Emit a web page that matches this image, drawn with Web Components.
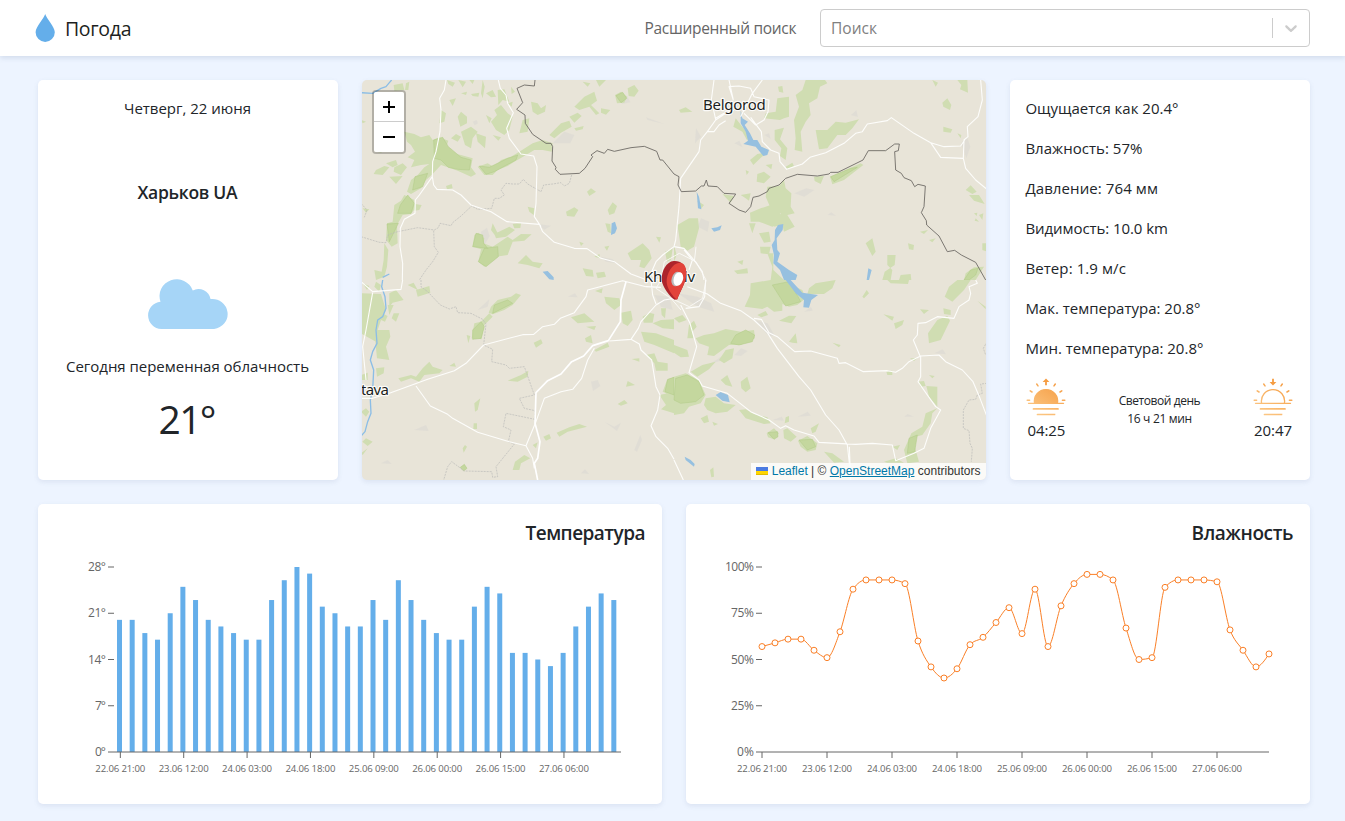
<!DOCTYPE html>
<html lang="ru">
<head>
<meta charset="utf-8">
<title>Погода</title>
<style>
html,body{margin:0;height:100%}
body{background:#edf4ff;color:#212529;font-family:"Open Sans","Noto Sans",sans-serif;font-size:15px;line-height:24px;overflow:hidden}
</style>
</head>
<body>
<weather-app></weather-app>
<script>
const define = (name, html, after) => {
  const tpl = document.createElement('template');
  tpl.innerHTML = html;
  customElements.define(name, class extends HTMLElement {
    constructor() {
      super();
      this.attachShadow({ mode: 'open' }).appendChild(tpl.content.cloneNode(true));
    }
    connectedCallback() { if (after) after.call(this, this.shadowRoot); }
  });
};

/* Single-line text tracked to a given width in px. */
define('fit-text', `<style>:host{display:inline-block;white-space:nowrap}span{display:inline-block}</style><span><slot></slot></span>`, function (root) {
  const span = root.querySelector('span');
  const w = parseFloat(this.getAttribute('w'));
  const n = this.textContent.length;
  span.style.letterSpacing = '0px';
  const natural = span.getBoundingClientRect().width;
  if (!w || !natural || n < 2) return;
  const gap = (w - natural) / (n - 1);
  span.style.letterSpacing = gap.toFixed(3) + 'px';
  span.style.marginRight = (-gap).toFixed(3) + 'px';
});

define('ui-card', `<style>:host{display:block;box-sizing:border-box;background:#fff;border-radius:5px;box-shadow:0 2px 5px rgba(90,110,150,.12);overflow:hidden}</style><slot></slot>`);

define('search-box', `<style>
:host{display:flex;align-items:center;box-sizing:border-box;width:490px;height:38px;border:1px solid #ccc;border-radius:4px;background:#fff;color:#808080}
.value{flex:1;padding-left:10px}
i{width:1px;height:20px;background:#ccc}
svg{margin:0 8px;width:20px;height:20px;fill:#ccc}
</style><div class="value"><fit-text w="46">Поиск</fit-text></div><i></i>
<svg viewBox="0 0 20 20"><path d="M4.516 7.548c.436-.446 1.043-.481 1.576 0L10 11.295l3.908-3.747c.533-.481 1.141-.446 1.574 0 .436.445.408 1.197 0 1.615-.406.418-4.695 4.502-4.695 4.502a1.095 1.095 0 0 1-1.576 0S4.924 9.581 4.516 9.163c-.409-.418-.436-1.17 0-1.615z"/></svg>`);

define('top-bar', `<style>
:host{display:flex;align-items:center;box-sizing:border-box;height:56px;padding:0 35px;background:#fff;box-shadow:0 2px 5px rgba(90,110,150,.18);position:relative;font-size:15.500px}
.brand{display:flex;align-items:center;gap:9px;font-size:19.500px;color:#1d1f21;flex:1}
.brand fit-text{position:relative;top:1px}
.link{color:#666;margin-right:23.500px}
</style>
<div class="brand"><svg width="21" height="28" viewBox="0 0 21 28"><path d="M10.2 0C11.4 4.600 19.800 12.500 19.800 18.300A9.600 9.600 0 0 1 .6 18.300C.6 12.500 9 4.600 10.200 0z" fill="#64aeea"/></svg><fit-text w="66.500">Погода</fit-text></div>
<fit-text class="link" w="152">Расширенный поиск</fit-text><search-box></search-box>`);

define('today-card', `<style>
:host{display:block}
ui-card{height:400px;padding:16px 1px 0 0;display:flex;flex-direction:column;align-items:center}
.city{font-weight:600;font-size:17.500px;line-height:30px;margin-top:57px}
svg{margin:72px 0 0 1px}
.desc{margin-top:24px}
.t{font-size:39px;line-height:48px;margin-top:17px}
</style>
<ui-card>
<fit-text w="127">Четверг, 22 июня</fit-text>
<fit-text class="city" w="100">Харьков UA</fit-text>
<svg width="80" height="51" viewBox="0.400 0 78.800 51" preserveAspectRatio="none"><path d="M13.500 50A13.700 13.700 0 0 1 12.700 22.700A16.500 16.500 0 0 1 44.500 11.500A12 12 0 0 1 62 20A15 15 0 0 1 65.500 50z" fill="#a6d5f7"/></svg>
<fit-text class="desc" w="243">Сегодня переменная облачность</fit-text>
<fit-text class="t" w="58">21°</fit-text>
</ui-card>`);

const sun = (fill, arrow, id) => `<svg width="40" height="42" viewBox="0 -1 40 42">
<defs><linearGradient id="${id}" gradientUnits="userSpaceOnUse" x1="30" y1="4" x2="8" y2="38"><stop offset="0" stop-color="#f59c42"/><stop offset="1" stop-color="#fcc987"/></linearGradient></defs>
<g fill="none" stroke="url(#${id})" stroke-width="1.300" stroke-linecap="round">
<path fill="${fill ? `url(#${id})` : 'none'}" d="M8.600 26.300A11.600 11.600 0 1 1 31.400 26.300${fill ? 'z' : ''}"/>
<path d="M2.500 26.300H37.500"/><path stroke-width="1.700" d="M7.500 31.900H32.001M11.500 37.500H28.500V37.501"/>
<path stroke-width="1.500" d="M1.200 23.300H3.600M36.400 23.300H38.800M4.200 13.900L6 15M35.800 13.900L34 15M10.700 7L12 8.900M29.300 7L28 8.900"/>
</g><path fill="#f59c42" d="${arrow}"/></svg>`;

define('details-card', `<style>
:host{display:block}
ui-card{height:400px;padding:16px 16px 0 15.400px}
p{margin:0 0 16px;height:24px}
.day{display:flex;justify-content:space-between;align-items:flex-start}
.side{display:flex;flex-direction:column;align-items:center;width:42px}
.mid{font-size:12px;line-height:18px;display:flex;flex-direction:column;align-items:center;padding-top:16px}
svg{display:block}
</style>
<ui-card>
<p><fit-text w="153">Ощущается как 20.4°</fit-text></p>
<p><fit-text w="117">Влажность: 57%</fit-text></p>
<p><fit-text w="132.500">Давление: 764 мм</fit-text></p>
<p><fit-text w="142.500">Видимость: 10.0 km</fit-text></p>
<p><fit-text w="100.500">Ветер: 1.9 м/с</fit-text></p>
<p><fit-text w="175">Мак. температура: 20.8°</fit-text></p>
<p><fit-text w="178">Мин. температура: 20.8°</fit-text></p>
<div class="day">
<div class="side">${sun(true, 'M20 1.500L23.400 5H20.900V8.300H19.100V5H16.600z', 'a')}<fit-text w="38">04:25</fit-text></div>
<div class="mid"><fit-text w="82">Световой день</fit-text><fit-text w="65">16 ч 21 мин</fit-text></div>
<div class="side">${sun(false, 'M20 8.500L16.600 5.100H19.100V1.800H20.900V5.100H23.400z', 'b')}<fit-text w="38">20:47</fit-text></div>
</div>
</ui-card>`);

/* Map geometry: each quarter has its own origin, 3 units per pixel. */
const quarters = [
{ x:0, y:0,
 g:'M130 155L160 162 180 172 205 165 215 180 235 172 262 182 255 205 275 220 300 225 335 235 330 262 345 282 330 290 290 272 260 262 240 255 215 282 195 300 180 325 150 342 138 335 150 300 170 285 190 262 205 252 180 255 150 262 160 240 140 232 162 215 150 195 138 185ZM100 375L120 362 130 345 160 360 163 385 150 402 125 405 108 435 110 490 92 500 75 480 78 430 95 425ZM70 490L82 510 78 560 70 590 45 600 40 570 62 575 68 540ZM350 260L380 250 400 262 420 240 450 230 475 215 515 190 545 180 575 190 572 215 545 210 520 210 490 228 460 245 440 258 410 270 395 285 370 285ZM565 165L600 130 625 122 632 140 600 158 580 175ZM625 110L650 98 662 108 640 128ZM640 145L668 138 665 148 645 152ZM670 50L700 35 708 62 690 75 715 100 705 105 685 80 655 90 640 80ZM762 45L780 35 798 50 790 68 768 70ZM800 25L820 15 833 32 820 50 803 48ZM720 85L748 90 735 104 720 98ZM705 0H735L715 20ZM665 5L688 10 680 20ZM400 90L420 75 440 100 455 110 445 150 430 165 405 150 390 125 408 105ZM510 65L530 70 540 85 555 75 552 95 530 105 515 95ZM485 120L505 115 500 155 475 160 480 140ZM300 155L330 140 350 155 335 175 330 205 312 195ZM270 175L285 162 300 170 290 185ZM345 160L375 170 372 205 350 185ZM240 90L255 100 250 125 235 130ZM265 60L285 55 275 78ZM258 0L282 8 275 20 262 12ZM292 0L315 5 305 22ZM365 0L371 20 365 55 360 40ZM375 40L395 30 405 50 390 52ZM330 42L355 38 352 50 335 48ZM410 30L430 28 445 65 425 60 412 75ZM290 110L300 95 318 110 318 130 298 140ZM98 15L125 10 130 30 100 32ZM135 10L145 5 142 30 132 30ZM45 270L70 258 85 262 65 285 38 282ZM75 250L105 240 110 255 95 262ZM100 262L125 250 138 262 120 285 98 275ZM85 290L125 288 105 312ZM5 385L25 388 15 398ZM255 318L272 312 275 325 258 328ZM162 372L182 375 175 390 160 392ZM375 105L392 115 385 130ZM300 40L318 35 315 45ZM325 0L340 0 335 12ZM450 20L462 35 452 42ZM395 165L420 172 412 182ZM440 70L455 65 452 80ZM340 465L352 458 370 475 368 490 395 500 440 470 455 480 480 462 512 463 490 482 455 485 440 525 405 530 370 560 352 545 360 508 335 500ZM395 430L410 460 405 470 390 450ZM400 462L445 440 462 450 435 470 405 475ZM455 432L480 430 478 444 460 445ZM470 550L495 525 515 545 545 550 535 565 500 555ZM500 380L520 385 518 405 505 395ZM678 335L690 325 705 335 685 348ZM615 395L640 382 652 390 640 410 618 408ZM740 390L755 367 768 378 760 400 745 405ZM733 430L748 432 750 460 740 455ZM800 520L845 490 865 510 872 535 850 565 835 560 840 540 810 540ZM885 470L900 472 895 488ZM700 530L715 522 718 535ZM655 485L668 490 660 498ZM665 565L695 570 698 590 675 588ZM705 578L730 575 735 590 710 595ZM912 515L935 505 930 540 918 545ZM730 500L745 497 738 512ZM0 120L15 125 5 130ZM55 205L62 218 45 215Z',
 d:'M218 180L245 172 262 200 300 232 330 240 325 270 290 268 262 262 240 240 220 235ZM162 290L200 280 185 320 155 330ZM118 375L140 345 160 370 150 400 110 400ZM78 432L112 430 85 485ZM355 258L385 262 440 235 470 225 465 240 400 275 375 283ZM352 545L370 505 410 500 412 530 375 560ZM335 500L345 460 365 465 368 490 380 505ZM765 47L785 37 797 55 780 68Z',
 w:'M752 430L762 425 768 445 762 460 750 465ZM545 575L560 573 578 592 578 600 565 598Z',
 r:'M255 0L250 30 236 55 240 90 237 155 225 215 215 245 214 290 175 345 163 360 162 400 130 418 118 445 117 500 125 550 124 600M214 290L218 315 228 328 275 330 300 345 330 375 390 395 438 425 535 433 545 455 580 487 640 505 678 506 720 535 760 545 810 582 850 597 900 600M412 0L418 25 435 45 440 70 457 98 437 145 445 175 480 222 518 228 528 260 525 370 520 410 540 440M939 500L905 525 885 545 872 575 880 600',
 rv:'M0 38L35 40 60 25 75 20 85 8 92 0M65 592L85 582',
 b:'M522 0L520 18 490 15 468 25 485 68 467 88 492 105 493 130 515 163 555 190 570 190 575 200 573 243 585 262 583 268 597 283 655 280 672 265 695 230 690 225 708 212 730 220 740 208 760 214 810 203 850 199 887 214 897 240 905 240 939 282',
 s:'M632 285L625 310 610 318 600 308 575 312 548 315 540 335 500 312 487 298 475 312 455 312 435 310 420 330 430 345 415 355 400 355 392 385 350 388 332 378 300 408 275 428 270 437 237 430 232 443 220 450 170 443 110 455 80 465 75 488 55 487 0 470M218 452L220 500 232 517 215 545 195 570 175 600M0 370L18 390 10 412' },
{ x:939, y:0,
 g:'M395 0H453L460 10 438 20 430 55 405 70 410 105 395 125 380 155 385 215 362 210 365 175 360 120 375 80 365 45 385 30ZM310 55L345 50 345 110 330 115 318 120 270 115 275 100 305 95ZM312 20L325 18 328 38 315 35ZM302 150L330 143 318 178 340 205 335 240 318 228 322 205 302 180ZM425 150L460 150 485 125 515 128 555 118 535 145 515 165 490 165 460 205 435 208ZM15 90L35 82 55 95 20 98ZM805 68L820 55 832 75 828 90 808 80ZM850 0H880L882 38 858 28 862 15ZM775 0L792 8 785 20ZM808 140L835 148 830 158 808 155ZM850 160L862 165 860 175ZM875 330L890 316 908 335 895 342ZM885 345L915 345 932 372 900 362ZM335 260L355 248 360 258 340 268ZM420 290L450 288 440 312 422 303ZM468 290L520 268 560 250 568 255 510 300 475 313ZM185 115L205 140 225 165 220 182 205 155 178 140ZM228 240L250 222 285 215 262 232 238 255ZM275 255L295 252 292 268ZM250 282L270 275 290 290 270 310 248 305ZM215 270L225 275 218 285ZM145 342L180 348 170 368ZM280 320L315 318 330 300 335 325 352 340 350 380 362 400 340 405 362 440 330 455 325 435 300 440 320 400 290 385 275 350ZM228 398L260 385 290 375 315 380 322 430 295 440 255 425 230 425ZM255 460L285 455 290 485 270 488ZM258 500L290 500 285 523 260 520ZM225 430L245 430 235 460ZM10 435L45 415 72 415 75 445 60 500 40 512 20 500 15 465ZM0 495L8 525 0 545ZM70 362L90 375 80 388ZM200 345L230 340 225 362 215 355ZM575 490L595 475 605 515 595 528ZM640 525L665 525 662 555 632 575 625 600H650L655 570 640 555ZM680 585L710 582 712 600H675ZM702 490L720 495 718 510 705 508ZM738 455L762 450 750 462ZM765 480L785 475 775 487ZM875 580L900 562 930 560 905 600H870ZM925 490H939V515L925 510ZM900 400L910 398 908 408ZM915 405L928 400 925 420ZM905 415L915 425 902 422ZM180 572L220 565 222 580 190 582ZM190 545L208 540 205 555ZM280 520L298 520 298 570 330 600H290L295 560Z',
 d:'M470 290L530 265 550 262 480 305ZM890 570L912 565 905 585 885 600H870Z',
 w:'M200 90L205 115 222 125 212 135 228 160 238 180 250 180 262 200 285 210 280 225 268 228 245 200 208 192 222 182 215 155 200 130ZM68 335L75 350 82 388 72 385ZM112 445L130 442 143 436 138 450 120 455ZM312 435L328 432 326 450 308 475 310 510 318 520 310 545 345 570 370 585 365 600H330L318 570 298 550 300 525 293 495 302 480 303 450ZM583 565L593 570 585 600H578Z',
 r:'M120 0L112 60 125 118M165 0L178 60 165 20 195 18 230 25 240 50 285 60 282 95 270 120 245 135 210 100M265 0L235 40 225 60 200 110M180 90L155 100 125 120 100 155 80 180 75 215 20 295 15 380 5 480 0 500M125 115L150 100M100 155H120L135 135 155 122M230 112L262 155 265 185 290 210 315 220 318 245 338 268 385 252 408 232 455 218 510 190 545 160 565 155 580 132 640 122 652 113 720 160 770 188 810 200 860 198 872 180M770 188L800 232 868 235 870 180 882 170 880 140 912 110 925 60 920 0M868 235L875 265 905 300 939 328M0 500L30 505 60 540 85 575 90 600M30 510L55 540 45 570',
 b:'M0 282L15 290 12 315 22 335 65 333 82 318 90 318 97 300 102 318 130 320 150 340 185 342 180 350 165 370 195 390 215 397 230 380 237 352 255 348 280 335 285 325 315 315 335 295 370 283 430 288 465 282 470 277 492 277 567 240 583 212 635 212 662 192 676 192 673 212 662 215 665 270 682 280 690 293 712 302 722 320 732 313 754 318 750 380 742 398 757 422 758 435 795 468 820 515 842 511 862 525 905 547 935 600', s:'' },
{ x:0, y:600,
 g:'M0 40L60 42 75 90 60 120 50 150 45 185 0 160ZM40 150L85 150 88 170 75 200 85 240 48 235 45 205ZM45 5L60 15 55 35 40 20ZM85 40L105 30 128 60 95 68 85 80ZM80 75L98 75 85 105ZM98 100L115 100 105 125 92 115ZM68 102L80 108 72 125 55 118ZM165 30L205 18 208 38 170 50ZM140 15L158 8 170 30ZM5 10L25 18 18 30ZM410 60L450 50 465 40 480 45 455 75 430 90 395 103 383 98 390 80ZM340 130L360 125 385 100 395 110 370 135 362 178 332 175ZM317 165L328 168 322 190ZM112 295L150 285 165 290 185 265 205 245 215 260 245 270 235 280 190 285 175 305 150 295 120 305ZM45 265L70 262 68 280 48 290ZM0 285L20 278 20 300H0ZM265 258L280 248 285 260ZM440 302L480 285 502 272 500 290 470 305ZM518 188L540 178 545 190 525 203ZM340 370L358 355 350 390 342 395ZM338 430H348V447H337ZM305 505L312 495 318 500 308 518ZM4 485L15 475 35 485 20 498ZM0 520L20 505 5 525ZM0 395L15 385 25 395 15 410ZM630 112L670 100 700 125 650 130ZM675 140L705 138 700 150ZM672 175L690 165 695 190 675 185ZM700 210L740 188 745 200 705 215ZM730 50L775 55 780 75 760 90 735 70ZM780 98L810 92 815 120 800 138 785 130ZM702 33L725 25 722 40ZM845 110L865 98 880 102 875 128 848 128ZM840 155L885 160 939 180V220L880 195 850 185ZM875 130L900 120 939 118V148L905 145ZM900 85L915 85 912 115 902 105ZM855 225L880 220 890 245 920 250 920 272 885 272 880 250ZM812 237L835 235 835 245ZM795 320L800 303 822 315ZM770 372L790 360 800 370 780 377ZM895 345L920 340 939 350V400L900 388 915 375ZM918 300L939 290V350L905 335ZM587 458L625 442 655 432 678 440 620 455 595 470ZM547 470L565 462 570 475 555 482ZM515 495L530 487 525 505ZM455 570L462 545 490 525 508 535 480 550 475 570Z',
 d:'M335 150L360 125 370 140 360 175 335 178ZM298 562L310 553 318 565 308 573ZM400 75L440 60 455 70 395 100ZM920 298L939 292V345L912 335Z',
 w:'',
 r:'M0 5L35 35 120 28 125 0M35 38L15 150 5 200 15 300M0 355L35 355 85 340 200 298 280 272 315 250 368 195 485 164 518 163 545 140 580 133 598 115 640 98 675 50 680 30 785 2 855 20 900 22M165 318L208 378 260 403 275 415 350 457 445 485 495 497 523 430 550 355 600 335 635 328 662 295 680 240 700 205M745 183L810 178 832 145 840 125 885 75 910 60 939 55M810 178L835 192 840 210 872 240 885 320 897 345 890 390 870 437 885 470 920 505 939 538M870 0L875 45 885 72M495 497L515 535 520 565',
 rr:'M795 5L780 60 778 125 742 182 695 197 668 228 632 245 600 282 560 302 525 338 522 430 537 485 530 535 520 550 530 600',
 rv:'M65 0L62 20 72 50 75 85 65 110 50 120 45 150 48 190 35 215 28 240 38 270 35 330 28 360 30 400 20 425 12 455 0 468',
 b:'', s:'M180 0L180 20 200 35 238 75 265 87 285 80 290 98 330 100 365 118 375 132 368 195 395 208 392 245 435 255 445 265 490 260 520 345 475 355 490 385 522 392 522 418 435 400 427 440 450 450 442 485 460 492 405 560 410 590 395 592 392 575 310 573 272 545 260 560 248 600' },
{ x:939, y:600,
 g:'M230 10L290 0H350L352 15 385 30 395 55 370 75 345 80 325 72 325 92 300 95 280 80 265 87 212 80 228 45ZM405 25L425 10 485 0 475 25 450 42 400 42ZM315 122L345 107 367 108 352 130ZM250 105L275 93 282 105 262 112ZM65 175L90 165 120 160 155 147 200 155 240 150 243 175 200 195 165 195 120 228 100 225 105 200 75 190ZM155 210L180 205 175 235 150 250 135 240ZM50 275L85 255 125 245 105 268 70 290ZM0 195L40 210 45 230 20 232 0 218ZM0 115L25 105 38 120 15 128ZM45 135L60 122 68 140 55 155 58 175 40 175ZM0 290L35 280 75 300 95 345 80 370 45 380 30 400 0 405ZM140 300L160 285 175 320 155 315ZM200 305L220 290 230 325 215 337 202 325ZM95 355L125 350 150 370 185 375 160 395 125 400 100 390 90 375ZM80 415L100 405 105 425 90 430ZM115 425L132 432 120 437ZM195 390L215 388 240 402 280 412 290 430 270 432 215 415ZM278 460L300 445 315 460 300 478 282 472ZM328 450L340 445 368 470 350 485 330 475ZM335 412L345 408 345 425 332 430ZM372 482L400 468 430 490 425 510 400 515 380 500ZM410 445L435 430 425 455 415 460ZM450 515L475 520 510 545 480 548ZM108 570L118 562 120 590 112 592ZM565 50L578 30 585 40 570 55ZM628 103L660 110 655 122ZM660 130L690 120 685 135 665 147ZM738 88L765 90 750 102ZM345 185L365 160 370 190 355 188ZM475 188L500 195 495 202ZM640 0H705L702 12 650 10ZM812 50L825 20 850 0H890L870 30 835 65ZM765 190L762 160 790 120 820 108 828 122 800 180ZM808 85L830 90 830 105 810 102ZM910 62L935 80V88ZM708 235L730 235 720 243ZM637 275L655 272 655 285 640 285ZM732 305L750 303 755 318 740 320ZM765 285L782 288 775 295ZM757 318L790 320 790 380 765 350ZM790 385L775 400 770 430 745 465 725 470 722 500 735 545 700 550 690 510 712 460 745 440 755 400ZM655 500L678 495 670 510ZM630 545L665 535 690 548H640Z',
 d:'M295 15L345 5 372 50 380 65 335 78ZM170 190L185 165 215 150 242 165 235 185 195 195ZM5 295L40 285 75 305 90 345 65 365 20 370 0 360ZM282 458L310 455 312 470 300 478ZM375 480L415 478 425 500 400 510ZM700 520L705 475 730 465 722 515Z',
 w:'M335 0H350L385 38 432 45 412 60 405 83 388 82 390 60 365 40ZM125 345L140 336 162 345 167 367 145 362ZM32 530L50 540 62 552 60 560 35 540Z',
 r:'M40 20L100 42 140 70 200 92 240 120 280 158 310 205 375 290 410 330 455 405 495 450 520 495 526 550M240 115L262 118 285 158 310 170 362 215 410 213 490 235 495 250 515 248 568 275 640 272 665 277 685 265 705 245 740 228 795 225 815 245 865 270 897 305 918 355 939 410M738 228L718 180 730 165 732 130 755 128 790 110 840 115 855 80 885 60 890 40 885 20 910 10 905 0M740 228V290L732 305 760 345 785 380 800 390 770 445 750 505 720 520 665 542 655 495 595 490 545 493 435 487 420 468 360 450 335 437 320 445 285 420 230 395 160 340 85 318 75 300 45 278 68 200 48 130 20 75M95 0L92 50 75 80 35 85M0 540L28 600M526 500L530 600',
 rv:'', b:'', s:'M939 310L920 312 925 340 910 345 905 358 885 360 868 390 868 445 885 452 888 490 895 505 892 545M939 185L928 205 935 225' }
];
const towns = 'M90 145l20 -12 8 18zM335 125l12 -5 4 10-10 6zM780 55l18-8 10 20-25 5zM855 112l55 20-50-12zM360 455l18-12 8 25-20 35zM530 432l40 5-20 12zM720 530l35 8 10 12-30-5zM575 190l35-35 30 10-12 25zM690 905l20-5 8 18-22 15zM620 650l22-10 8 12zM1300 340l35-15 25 5-30 20zM1010 440l10-25 25 10-5 30zM950 640l60 10 40 20 10 25-50-15zM1180 720l40 10 20 35-15 5zM880 645l45 5 10 40-35-10zM1400 405l10-8 15 10zM1630 1010l10-8 18 8zM1120 825l20-20 20 8-20 15zM1050 850l30-20 10 10zM160 1050l35-15 8 18zM60 1150l20-10 12 12zM660 1180l12-12 12 14zM1310 1010l30-15 10 12zM1005 145l15 25-18 20zM1210 165l14-5 5 16zM1470 105l16-14 5 20zM1800 190l18-20 10 30-12 35zM1330 695l20-15 5 12zM350 690l35-32-5 22zM820 1110l18-45 5 15-15 35zM730 1025l30 15 20-12-12 25zM1720 820l25-12 10 15zM1120 190l15-8 10 20zM1235 1020l28-10 5 12z';

define('region-map', `<style>
:host{display:block;position:relative;height:400px;border-radius:5px;overflow:hidden;background:#e8e4d8;box-shadow:0 2px 5px rgba(90,110,150,.12);font-family:"Liberation Sans",Arial,sans-serif}
svg.map{display:block;width:100%;height:100%}
.zoom{position:absolute;left:10px;top:10px;border:2px solid rgba(0,0,0,.23);border-radius:4px;background-clip:padding-box}
.zoom div{box-sizing:border-box;width:30px;height:30px;background:#fff;display:grid;place-items:center;border-radius:0 0 2px 2px}
.zoom div:first-child{border-bottom:1px solid #ccc;border-radius:2px 2px 0 0}
.zoom svg{display:block}
.attr{position:absolute;right:0;bottom:0;height:17px;box-sizing:border-box;padding:0 5.500px 0 5px;background:rgba(255,255,255,.8);font-size:12px;line-height:17px;color:#333;white-space:nowrap}
.attr span{color:#0078a8}.attr u{color:#0078a8}
.flag{margin-right:3.500px}
</style>
<svg class="map" viewBox="3 0 1872 1200" preserveAspectRatio="none" stroke-linejoin="round">
<path d="${towns}" fill="#dddbd4" opacity=".75"/>
${quarters.map(q => `<g transform="translate(${q.x} ${q.y})">
<path d="${q.g}" fill="#d0ddb2"/><path d="${q.d}" fill="#c4d79e" stroke="#b0ca86" stroke-width="1.500"/></g>`).join('')}
${quarters.map(q => `<g transform="translate(${q.x} ${q.y})" fill="none">
<path d="${q.w}" fill="#96c0e0"/><path d="${q.rv}" stroke="#8bbde6" stroke-width="4"/>
<path d="${q.s}" stroke="#bdbdbb" stroke-width="2.200" stroke-dasharray="6 3"/>
<path d="${q.r}" stroke="#fdfdfb" stroke-width="3.300"/><path d="${q.rr || ''}" stroke="#fff" stroke-width="5"/>
<path d="${q.b}" stroke="#6a6661" stroke-width="2.600"/></g>`).join('')}
<g fill="none" stroke="#fdfdfb" stroke-width="2.500"><path d="M900 600L885 625 930 655 985 680 1025 655 1035 600 1005 545 955 520 910 545 900 600M930 655L960 690M1000 545L1005 500"/></g>
<g font-family="Noto Sans, sans-serif" font-size="45" fill="#1c1e20" stroke="#fff" stroke-opacity=".85" stroke-width="7" paint-order="stroke">
<text x="1026" y="91" textLength="188">Belgorod</text><text x="849" y="607" textLength="153">Kharkiv</text><text x="0" y="946" textLength="84">tava</text></g>
<g transform="translate(837 510)">
<path d="M101 33C80 35 64 62 65 90C66 108 90 142 104 149L112 148C120 125 139 98 139 70C139 45 121 31 101 33z" fill="#ad242b"/>
<path d="M118 38C97 40 79 70 80 97C81 115 97 140 111 149C119 126 139 98 139 70C139 48 131 37 118 38z" fill="#e2433a"/>
<ellipse cx="109" cy="87" rx="14" ry="22" fill="#b9b9bb" transform="rotate(17 109 87)"/><ellipse cx="115" cy="87" rx="14" ry="21" fill="#fff" transform="rotate(17 115 87)"/></g>
</svg>
<div class="zoom"><div><svg width="14" height="14"><path d="M1 7H13M7 1V13" stroke="#000" stroke-width="2"/></svg></div><div><svg width="14" height="14"><path d="M1 7H13" stroke="#000" stroke-width="2"/></svg></div></div>
<div class="attr"><svg class="flag" width="12" height="8"><path fill="#4C7BE1" d="M0 0h12v4H0z"/><path fill="#FFD500" d="M0 4h12v3H0z"/><path fill="#E0BC00" d="M0 7h12v1H0z"/></svg><span>Leaflet</span> | © <u>OpenStreetMap</u> contributors</div>`);

/* Shared axes of both charts, in card coordinates. */
const AX = { x0: 76, x1: 583, y0: 248, h: 185 };
const DATES = ['22.06 21:00','23.06 12:00','24.06 03:00','24.06 18:00','25.06 09:00','26.06 00:00','26.06 15:00','27.06 06:00'];
const chartStyle = `<style>
:host{display:block}
ui-card{height:300px;display:grid}
h2{grid-area:1/1;margin:17px 16.500px 0 0;justify-self:end;align-self:start;font-size:19px;line-height:24px;font-weight:600}
svg{grid-area:1/1;display:block}
text{fill:#666;font-size:12px}
.d{font-size:9.600px;text-anchor:middle}
.v{text-anchor:end}
</style>`;
const axes = (labels, widths, first, step) =>
  `<g stroke="#666" fill="none"><path d="M${AX.x0} 248H${AX.x1}${labels.map((_, i) => `M70 ${248 - i * 46.25}h6`).join('')}${DATES.map((_, i) => `M${first + i * step} 248v6`).join('')}"/></g>` +
  labels.map((l, i) => `<text class="v" x="68" y="${252 - i * 46.25}" textLength="${widths[i]}">${l}</text>`).join('') +
  DATES.map((l, i) => `<text class="d" x="${first + i * step}" y="268" textLength="50">${l}</text>`).join('');

const temps = [20,20,18,17,21,25,23,20,19,18,17,17,23,26,28,27,22,21,19,19,23,20,26,23,20,18,17,17,22,25,24,15,15,14,13,15,19,22,24,23];
define('temperature-chart', `${chartStyle}<ui-card><svg width="624" height="300">
${temps.map((t, i) => `<rect x="${79 + i * 12.675}" y="${248 - t / 28 * 185}" width="5" height="${t / 28 * 185}" fill="#64aeea"/>`).join('')}
${axes(['0°','7°','14°','21°','28°'], [11,11,18,18,18], 82.34, 63.375)}
</svg><h2><fit-text w="120">Температура</fit-text></h2></ui-card>`);

const hum = [57,59,61,61,55,51,65,88,93,93,93,91,60,46,40,45,58,62,70,78,64,88,57,79,91,96,96,93,67,50,51,89,93,93,93,92,66,55,46,53];
const pts = hum.map((v, i) => [AX.x0 + i * 13, AX.y0 - v * 1.85]);
const monotone = p => {
  const s = p.slice(1).map((q, i) => (q[1] - p[i][1]) / 13);
  const m = p.map((_, i) => {
    if (i === 0 || i === p.length - 1) return null;
    const a = s[i - 1], b = s[i];
    return (Math.sign(a) + Math.sign(b)) * Math.min(Math.abs(a), Math.abs(b), Math.abs(a + b) / 4) || 0;
  });
  m[0] = (3 * s[0] - m[1]) / 2;
  m[p.length - 1] = (3 * s[s.length - 1] - m[p.length - 2]) / 2;
  return 'M' + p[0] + s.map((_, i) => `C${p[i][0] + 13 / 3} ${p[i][1] + m[i] * 13 / 3} ${p[i + 1][0] - 13 / 3} ${p[i + 1][1] - m[i + 1] * 13 / 3} ${p[i + 1][0]} ${p[i + 1][1]}`).join('');
};
define('humidity-chart', `${chartStyle}<ui-card><svg width="624" height="300">
${axes(['0%','25%','50%','75%','100%'], [17,23,23,23,29], 76, 65)}
<g stroke="#fa7f27" fill="none"><path d="${monotone(pts)}"/>${pts.map(p => `<circle cx="${p[0]}" cy="${p[1]}" r="3" fill="#fff"/>`).join('')}</g>
</svg><h2><fit-text w="102">Влажность</fit-text></h2></ui-card>`);

define('weather-app', `<style>
:host{display:block}
main{display:grid;gap:24px;padding:24px 35px 17px 38px}
.a{display:grid;grid-template-columns:300px 624px 300px;gap:24px}
.b{display:grid;grid-template-columns:624px 624px;gap:24px}
</style>
<top-bar></top-bar>
<main><div class="a"><today-card></today-card><region-map></region-map><details-card></details-card></div>
<div class="b"><temperature-chart></temperature-chart><humidity-chart></humidity-chart></div></main>`);
</script>
</body>
</html>
